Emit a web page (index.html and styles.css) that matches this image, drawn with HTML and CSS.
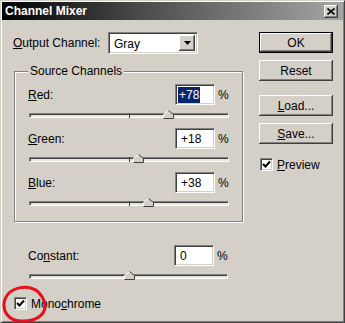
FILE: index.html
```html
<!DOCTYPE html>
<html>
<head>
<meta charset="utf-8">
<link rel="stylesheet" href="styles.css">
</head>
<body>
<div class="window">
  <div class="titlebar">
    <span class="title">Channel Mixer</span>
    <span class="close"><svg width="8" height="7" viewBox="0 0 8 7"><path d="M0.5 0.5 L7.5 6.5 M7.5 0.5 L0.5 6.5" stroke="#000" stroke-width="1.6" fill="none"/></svg></span>
  </div>
  <div class="body">
    <div class="left">
      <div class="output-row">
        <span class="olbl"><u>O</u>utput Channel:</span>
        <div class="select">
          <span class="sel-val">Gray</span>
          <span class="sel-btn"><svg width="7" height="4" viewBox="0 0 7 4"><path d="M0 0 H7 L3.5 4 Z" fill="#000"/></svg></span>
        </div>
      </div>
      <div class="group">
        <div class="legend">Source Channels</div>
        <div class="ctl"><span class="lbl"><u>R</u>ed:</span><span class="field"><span class="hl">+78</span></span><span class="pct">%</span></div>
        <div class="slider"><div class="track"><span class="tick"></span></div><svg class="thumb" style="left:69.5%" width="11" height="9" viewBox="0 0 11 9"><path d="M0.5 8.5 V4.5 L5.5 0.5 L10.5 4.5 V8.5 Z" fill="#d4d0c8"/><path d="M0.5 8.5 V4.5 L5.5 0.5" stroke="#fff" fill="none"/><path d="M5.5 0.5 L10.5 4.5 V8.5 H0.5" stroke="#404040" fill="none"/></svg></div>
        <div class="ctl"><span class="lbl"><u>G</u>reen:</span><span class="field"><span class="txt">+18</span></span><span class="pct">%</span></div>
        <div class="slider"><div class="track"><span class="tick"></span></div><svg class="thumb" style="left:54.5%" width="11" height="9" viewBox="0 0 11 9"><path d="M0.5 8.5 V4.5 L5.5 0.5 L10.5 4.5 V8.5 Z" fill="#d4d0c8"/><path d="M0.5 8.5 V4.5 L5.5 0.5" stroke="#fff" fill="none"/><path d="M5.5 0.5 L10.5 4.5 V8.5 H0.5" stroke="#404040" fill="none"/></svg></div>
        <div class="ctl"><span class="lbl"><u>B</u>lue:</span><span class="field"><span class="txt">+38</span></span><span class="pct">%</span></div>
        <div class="slider"><div class="track"><span class="tick"></span></div><svg class="thumb" style="left:59.5%" width="11" height="9" viewBox="0 0 11 9"><path d="M0.5 8.5 V4.5 L5.5 0.5 L10.5 4.5 V8.5 Z" fill="#d4d0c8"/><path d="M0.5 8.5 V4.5 L5.5 0.5" stroke="#fff" fill="none"/><path d="M5.5 0.5 L10.5 4.5 V8.5 H0.5" stroke="#404040" fill="none"/></svg></div>
      </div>
      <div class="constant">
        <div class="ctl"><span class="lbl">Co<u>n</u>stant:</span><span class="field"><span class="txt">0</span></span><span class="pct">%</span></div>
        <div class="slider"><div class="track"><span class="tick"></span></div><svg class="thumb" style="left:50%" width="11" height="9" viewBox="0 0 11 9"><path d="M0.5 8.5 V4.5 L5.5 0.5 L10.5 4.5 V8.5 Z" fill="#d4d0c8"/><path d="M0.5 8.5 V4.5 L5.5 0.5" stroke="#fff" fill="none"/><path d="M5.5 0.5 L10.5 4.5 V8.5 H0.5" stroke="#404040" fill="none"/></svg></div>
      </div>
      <div class="check mono">
        <span class="box"><svg width="9" height="9" viewBox="0 0 9 9"><path d="M1 4 L3.5 6.5 L8 1.5" stroke="#000" stroke-width="2" fill="none"/></svg></span>
        <span>Mono<u>c</u>hrome</span>
      </div>
    </div>
    <div class="right">
      <div class="btn default">OK</div>
      <div class="btn reset">Reset</div>
      <div class="btn load"><u>L</u>oad...</div>
      <div class="btn save"><u>S</u>ave...</div>
      <div class="check preview">
        <span class="box"><svg width="9" height="9" viewBox="0 0 9 9"><path d="M1 4 L3.5 6.5 L8 1.5" stroke="#000" stroke-width="2" fill="none"/></svg></span>
        <span><u>P</u>review</span>
      </div>
    </div>
  </div>
  <svg class="circle" width="345" height="323" viewBox="0 0 345 323"><path d="M36 290 C 26 283, 9 286, 4 298 C 0 310, 8 320, 20 320 C 34 321, 45 314, 44 304 C 43 297, 40 293, 35 289" stroke="#e8101a" stroke-width="3" fill="none" stroke-linecap="round"/></svg>
</div>
</body>
</html>
```

FILE: styles.css
```css
html, body {
  margin: 0;
  padding: 0;
}
body {
  font-family: "Liberation Sans", Arial, sans-serif;
  font-size: 12px;
  color: #000;
  background: #d4d0c8;
}
.window {
  position: relative;
  width: 345px;
  height: 323px;
  box-sizing: border-box;
  background: #d4d0c8;
  border: 1px solid;
  border-color: #d4d0c8 #404040 #404040 #d4d0c8;
  box-shadow: inset 1px 1px #fff, inset -1px -1px #808080;
  padding: 1px;
}
.titlebar {
  height: 18px;
  display: flex;
  align-items: center;
  justify-content: space-between;
  background: linear-gradient(90deg, #000 0%, #4a4a4a 40%, #a6a6a6 100%);
  padding: 0 5px 0 3px;
  color: #fff;
  font-weight: bold;
  font-size: 12px;
}
.close {
  width: 14px;
  height: 13px;
  box-sizing: border-box;
  background: #d4d0c8;
  box-shadow: inset -1px -1px #404040, inset 1px 1px #fff, inset -2px -2px #808080;
  display: flex;
  align-items: center;
  justify-content: center;
}
.body {
  display: flex;
  padding: 0 10px 0 11px;
}
.left {
  width: 230px;
}
.right {
  width: 74px;
  margin-left: auto;
}
.output-row {
  display: flex;
  align-items: center;
  margin-top: 12px;
  height: 22px;
}
.olbl {
  width: 95px;
}
.select {
  width: 90px;
  height: 22px;
  box-sizing: border-box;
  background: #fff;
  border: 1px solid;
  border-color: #808080 #fff #fff #808080;
  box-shadow: inset 1px 1px #404040, inset -1px -1px #d4d0c8;
  display: flex;
  padding: 2px;
}
.sel-val {
  flex: 1;
  padding-left: 3px;
  line-height: 18px;
}
.sel-btn {
  width: 16px;
  background: #d4d0c8;
  box-shadow: inset -1px -1px #404040, inset 1px 1px #fff, inset -2px -2px #808080;
  display: flex;
  align-items: center;
  justify-content: center;
}
.group {
  margin: 17px 0 0 1px;
  width: 229px;
  box-sizing: border-box;
  border: 1px solid #808080;
  box-shadow: 1px 1px 0 #fff, inset 1px 1px 0 #fff;
  padding: 0 13px 5px 13px;
}
.legend {
  margin: -8px 0 5px 0;
  width: max-content;
  background: #d4d0c8;
  padding: 0 2px;
  line-height: 15px;
}
.ctl {
  display: flex;
  align-items: center;
  height: 21px;
}
.lbl {
  flex: 1;
}
.field {
  width: 40px;
  height: 21px;
  box-sizing: border-box;
  background: #fff;
  border: 1px solid;
  border-color: #808080 #fff #fff #808080;
  box-shadow: inset 1px 1px #404040, inset -1px -1px #d4d0c8;
  display: flex;
  align-items: center;
  padding-left: 2px;
}
.txt {
  padding-left: 3px;
}
.hl {
  background: #0a246a;
  color: #fff;
  line-height: 16px;
  padding: 0 1px;
}
.pct {
  width: 11px;
  margin-left: 3px;
}
.slider {
  position: relative;
  height: 15px;
  padding-top: 8px;
  margin-left: 1px;
}
.track {
  position: relative;
  height: 5px;
  box-sizing: border-box;
  border: 1px solid;
  border-color: #808080 #fff #fff #808080;
  box-shadow: inset 1px 1px #404040;
  background: #e6e4de;
}
.tick {
  position: absolute;
  left: 50%;
  top: -1px;
  width: 1px;
  height: 5px;
  background: #404040;
}
.thumb {
  position: absolute;
  top: 5px;
  margin-left: -5px;
}
.constant {
  margin-top: 23px;
  padding: 0 15px;
}
.check {
  display: flex;
  align-items: center;
  gap: 4px;
  height: 13px;
}
.box {
  width: 13px;
  height: 13px;
  box-sizing: border-box;
  background: #fff;
  border: 1px solid;
  border-color: #808080 #fff #fff #808080;
  box-shadow: inset 1px 1px #404040, inset -1px -1px #d4d0c8;
  display: flex;
  align-items: center;
  justify-content: center;
}
.mono {
  margin-top: 8px;
  margin-left: 1px;
}
.btn {
  height: 21px;
  box-sizing: border-box;
  background: #d4d0c8;
  box-shadow: inset -1px -1px #404040, inset 1px 1px #fff, inset -2px -2px #808080;
  display: flex;
  align-items: center;
  justify-content: center;
}
.btn.default {
  margin-top: 12px;
  border: 1px solid #000;
}
.reset, .save {
  margin-top: 7px;
}
.load {
  margin-top: 14px;
}
.preview {
  margin-top: 14px;
  margin-left: 1px;
}
.circle {
  position: absolute;
  left: 0;
  top: 0;
  pointer-events: none;
}
```
